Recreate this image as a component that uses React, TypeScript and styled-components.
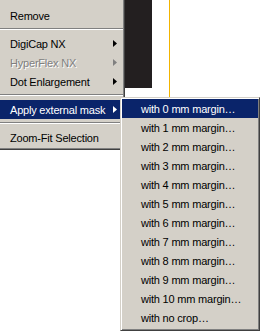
import styled, { createGlobalStyle } from "styled-components";

// ==================== context menu with "Apply external mask" submenu =================

const GlobalStyle = createGlobalStyle`
  html, body {
    margin: 0;
    padding: 0;
    background: #ffffff;
    overflow: hidden;
  }
  body {
    font-family: "Liberation Sans", Arial, sans-serif;
  }
`;

const mainItems: MenuEntry[] = [
  { label: "Remove" },
  { separator: true },
  { label: "DigiCap NX", sub: true },
  { label: "HyperFlex NX", sub: true, disabled: true },
  { label: "Dot Enlargement", sub: true },
  { separator: true },
  { label: "Apply external mask", sub: true, active: true },
  { separator: true },
  { label: "Zoom-Fit Selection" },
];

const maskItems = [
  ...Array.from({ length: 11 }, (_, i) => `with ${i} mm margin…`),
  "with no crop…",
];

const Arrow = ({ color }: { color: string }) => (
  <svg width="4" height="7" viewBox="0 0 4 7">
    <polygon points="0,0 4,3.5 0,7" fill={color} />
  </svg>
);

const App = () => {
  return (
    <Page>
      <GlobalStyle />
      <Backdrop>
        <DarkPanel />
        <GuideLine />
      </Backdrop>

      <MainMenu>
        {mainItems.map((item, i) =>
          item.separator ? (
            <Separator key={i} />
          ) : (
            <MainRow key={i} $active={item.active} $disabled={item.disabled}>
              <span>{item.label}</span>
              {item.sub && <Arrow color={item.active ? "#ffffff" : item.disabled ? "#808080" : "#000000"} />}
            </MainRow>
          )
        )}
      </MainMenu>

      <SubMenu>
        {maskItems.map((label, i) => (
          <SubRow key={label} $active={i === 0}>
            {label}
          </SubRow>
        ))}
      </SubMenu>
    </Page>
  );
};

export default App;

const Page = styled.div`
  position: relative;
  width: 278px;
  height: 335px;
  background: #ffffff;
  overflow: hidden;
`;

// canvas behind the popups
const Backdrop = styled.div`
  display: flex;
  align-items: flex-start;
  padding-left: 125px;
  gap: 17px;
`;

const DarkPanel = styled.div`
  width: 27px;
  height: 88px;
  background: #231f20;
`;

const GuideLine = styled.div`
  width: 1px;
  height: 110px;
  background: #f2b400;
`;

// popup menus (overlay content)
const MainMenu = styled.div`
  position: absolute;
  left: 0;
  top: 0;
  width: 125px;
  box-sizing: border-box;
  padding: 6px 1px 2px 0;
  background: #d4d0c8;
  border-right: 1px solid #404040;
  border-bottom: 1px solid #404040;
  box-shadow: inset -1px -1px 0 #808080;
  display: flex;
  flex-direction: column;
`;

const SubMenu = styled.div`
  position: absolute;
  left: 120px;
  top: 97px;
  width: 140px;
  box-sizing: border-box;
  padding: 1px 1px 3px 1px;
  background: #d4d0c8;
  border: 1px solid;
  border-color: #d4d0c8 #404040 #404040 #d4d0c8;
  box-shadow: inset 1px 1px 0 #ffffff, inset -1px -1px 0 #808080;
  display: flex;
  flex-direction: column;
`;

const Separator = styled.div`
  height: 9px;
  box-sizing: border-box;
  padding-top: 3px;

  &::before {
    content: "";
    display: block;
    height: 1px;
    background: #808080;
    border-bottom: 1px solid #ffffff;
  }
`;

const rowText = `
  height: 19px;
  display: flex;
  align-items: center;
  font-size: 11px;
  letter-spacing: -0.2px;
  white-space: nowrap;
`;

const MainRow = styled.div<{ $active?: boolean; $disabled?: boolean }>`
  ${rowText}
  justify-content: space-between;
  margin-right: 3px;
  padding: 0 3px 0 10px;
  background: ${(p) => (p.$active ? "#0a246a" : "transparent")};
  color: ${(p) => (p.$active ? "#ffffff" : p.$disabled ? "#808080" : "#000000")};
  text-shadow: ${(p) => (p.$disabled ? "1px 1px 0 #ffffff" : "none")};

  svg {
    flex-shrink: 0;
  }
`;

const SubRow = styled.div<{ $active?: boolean }>`
  ${rowText}
  padding-left: 19px;
  background: ${(p) => (p.$active ? "#0a246a" : "transparent")};
  color: ${(p) => (p.$active ? "#ffffff" : "#000000")};
`;

interface MenuEntry {
  label?: string;
  separator?: boolean;
  sub?: boolean;
  disabled?: boolean;
  active?: boolean;
}
